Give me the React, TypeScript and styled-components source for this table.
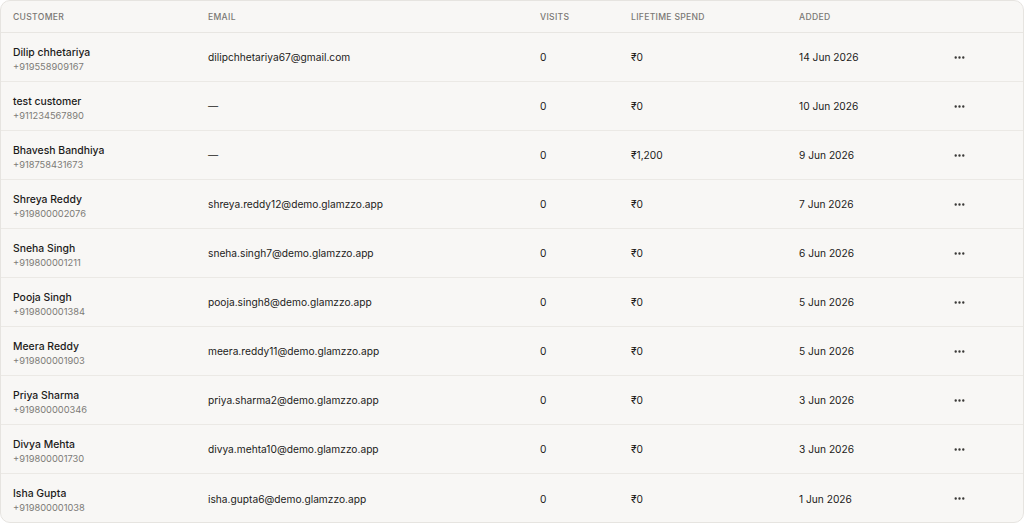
import React from "react";
import styled, { createGlobalStyle } from "styled-components";
import { Ellipsis } from "lucide-react";

const Global = createGlobalStyle`
  html, body { margin: 0; padding: 0; background: #ffffff; }
  body { font-family: Inter, "Noto Sans", sans-serif; -webkit-font-smoothing: antialiased; }
  * { box-sizing: border-box; }
`;

const Card = styled.div`
  width: 1024px;
  height: 523px;
  background: #f8f7f5;
  border: 1px solid #e6e4e0;
  border-radius: 10px;
  overflow: hidden;
`;

const COLS = "195px 332px 91px 168px 154px 1fr";

const HeadRow = styled.div`
  display: grid;
  grid-template-columns: ${COLS};
  height: 32px;
  align-items: center;
  border-bottom: 1px solid #e8e6e2;
`;

const HeadCell = styled.div`
  padding-left: 12px;
  padding-top: 1px;
  font-size: 8.6px;
  font-weight: 500;
  letter-spacing: 0.3px;
  color: #7a7874;
  text-transform: uppercase;
`;

const Row = styled.div`
  display: grid;
  grid-template-columns: ${COLS};
  height: 49px;
  align-items: center;
  border-bottom: 1px solid #ebe9e5;
  &:last-child { border-bottom: none; }
`;

const Cell = styled.div`
  padding-left: 12px;
  font-size: 10.2px;
  color: #1c1b1a;
`;

const CustomerCell = styled(Cell)`
  padding-top: 4px;
`;

const Name = styled.div`
  font-size: 10.4px;
  font-weight: 500;
  color: #1c1b1a;
  line-height: 13px;
`;

const Phone = styled.div`
  font-size: 9.3px;
  color: #7d7b77;
  line-height: 13px;
  margin-top: 1px;
`;

const Actions = styled.div`
  padding-left: 12px;
  display: flex;
  align-items: center;
  color: #3a3937;
`;

type C = { name: string; phone: string; email: string; visits: string; spend: string; added: string };

const rows: C[] = [
  { name: "Dilip chhetariya", phone: "+919558909167", email: "dilipchhetariya67@gmail.com", visits: "0", spend: "₹0", added: "14 Jun 2026" },
  { name: "test customer", phone: "+911234567890", email: "—", visits: "0", spend: "₹0", added: "10 Jun 2026" },
  { name: "Bhavesh Bandhiya", phone: "+918758431673", email: "—", visits: "0", spend: "₹1,200", added: "9 Jun 2026" },
  { name: "Shreya Reddy", phone: "+919800002076", email: "shreya.reddy12@demo.glamzzo.app", visits: "0", spend: "₹0", added: "7 Jun 2026" },
  { name: "Sneha Singh", phone: "+919800001211", email: "sneha.singh7@demo.glamzzo.app", visits: "0", spend: "₹0", added: "6 Jun 2026" },
  { name: "Pooja Singh", phone: "+919800001384", email: "pooja.singh8@demo.glamzzo.app", visits: "0", spend: "₹0", added: "5 Jun 2026" },
  { name: "Meera Reddy", phone: "+919800001903", email: "meera.reddy11@demo.glamzzo.app", visits: "0", spend: "₹0", added: "5 Jun 2026" },
  { name: "Priya Sharma", phone: "+919800000346", email: "priya.sharma2@demo.glamzzo.app", visits: "0", spend: "₹0", added: "3 Jun 2026" },
  { name: "Divya Mehta", phone: "+919800001730", email: "divya.mehta10@demo.glamzzo.app", visits: "0", spend: "₹0", added: "3 Jun 2026" },
  { name: "Isha Gupta", phone: "+919800001038", email: "isha.gupta6@demo.glamzzo.app", visits: "0", spend: "₹0", added: "1 Jun 2026" },
];

export default function App() {
  return (
    <>
      <Global />
      <Card>
        <HeadRow>
          <HeadCell>Customer</HeadCell>
          <HeadCell>Email</HeadCell>
          <HeadCell>Visits</HeadCell>
          <HeadCell>Lifetime spend</HeadCell>
          <HeadCell>Added</HeadCell>
          <HeadCell />
        </HeadRow>
        {rows.map((r) => (
          <Row key={r.phone}>
            <CustomerCell>
              <Name>{r.name}</Name>
              <Phone>{r.phone}</Phone>
            </CustomerCell>
            <Cell>{r.email}</Cell>
            <Cell>{r.visits}</Cell>
            <Cell>{r.spend}</Cell>
            <Cell>{r.added}</Cell>
            <Actions>
              <Ellipsis size={13} strokeWidth={2.4} />
            </Actions>
          </Row>
        ))}
      </Card>
    </>
  );
}
